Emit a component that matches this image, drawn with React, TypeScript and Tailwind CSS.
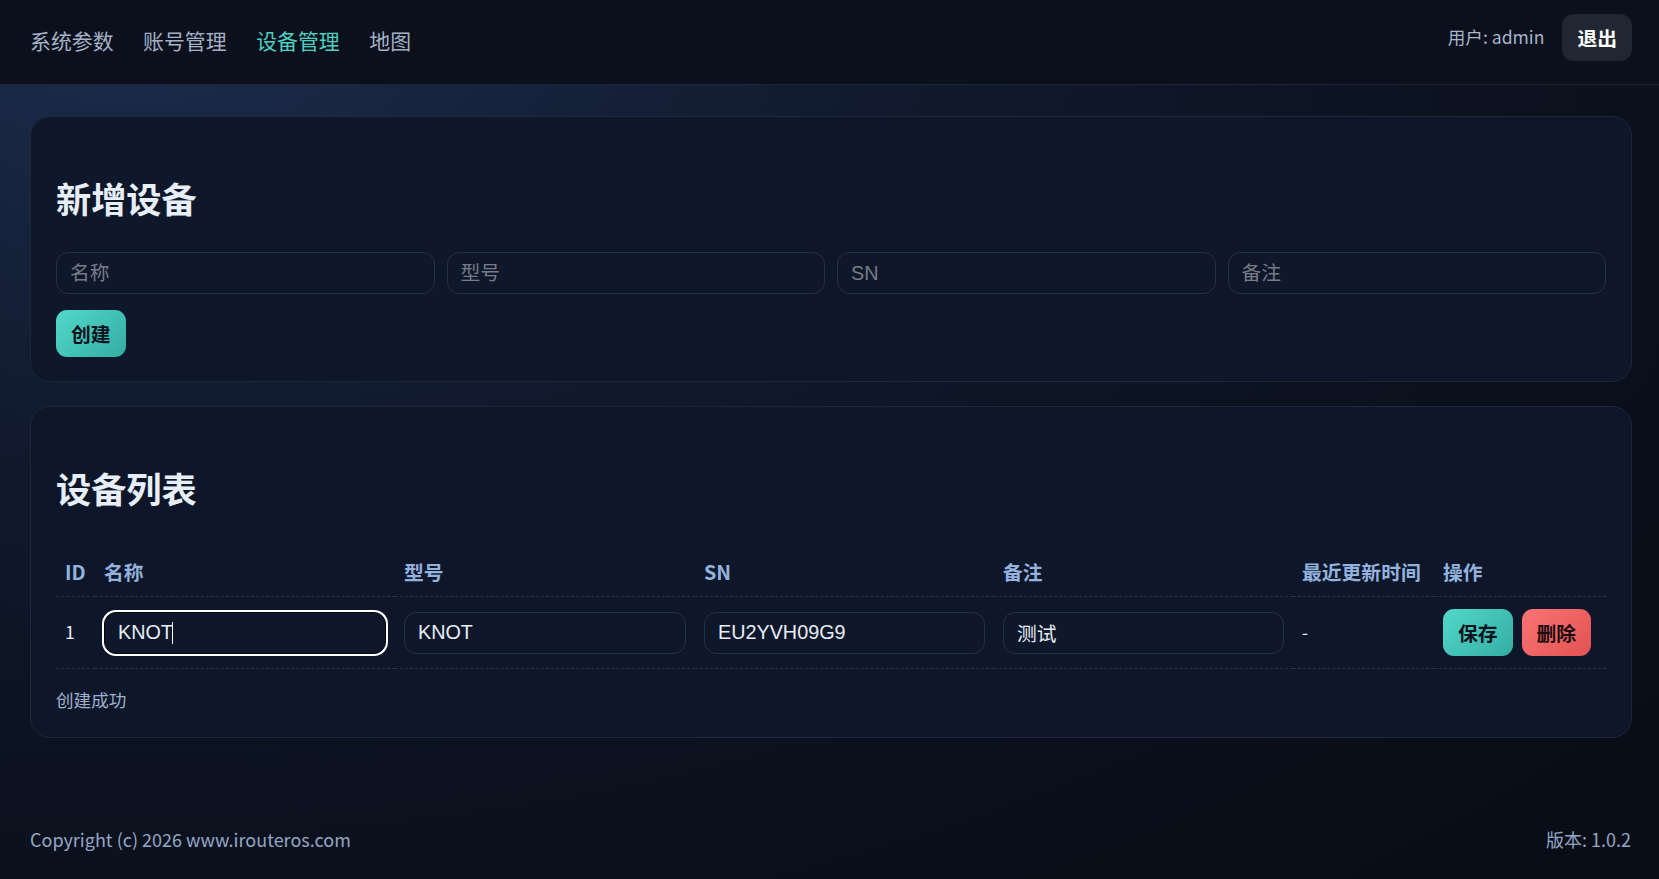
import React from 'react';

interface Device {
  id: number;
  name: string;
  model: string;
  sn: string;
  note: string;
  updatedAt: string;
}

const devices: Device[] = [
  { id: 1, name: 'KNOT', model: 'KNOT', sn: 'EU2YVH09G9', note: '测试', updatedAt: '-' },
];

const navItems = ['系统参数', '账号管理', '设备管理', '地图'];

const inputClass =
  "h-[42px] w-full rounded-[12px] border border-[#263044] bg-[#0f172a] px-[13px] text-[19.8px] text-[#e8eef6] placeholder:text-[#767c87] outline-none font-['Liberation_Sans','Noto_Sans_CJK_SC',sans-serif]";

const cellInputClass =
  "h-[42px] w-full rounded-[12px] border bg-[#0f172a] px-[13px] text-[19.8px] text-[#e8eef6] outline-none font-['Liberation_Sans','Noto_Sans_CJK_SC',sans-serif]";

const primaryBtn =
  'h-[47px] rounded-[11px] bg-[linear-gradient(135deg,#52d8c9,#34ada3)] px-[15px] text-[19.8px] font-bold text-[#0b1220]';

const dangerBtn =
  'h-[47px] rounded-[11px] bg-[linear-gradient(135deg,#fb7474,#e25252)] px-[15px] text-[19.8px] font-bold text-[#1a0b0e]';

const NavBar: React.FC = () => (
  <header className="flex items-start justify-between border-b border-[#1c2435] bg-[#0b101c] pt-[14px] pb-[23px] pl-[30px] pr-[27px]">
    <nav className="mt-[6px] flex items-center gap-[29.5px] text-[20.9px] leading-[41px]">
      {navItems.map(item => (
        <a
          key={item}
          className={item === '设备管理' ? 'text-[#4fd1c2]' : 'text-[#a3b0c6]'}
        >
          {item}
        </a>
      ))}
    </nav>
    <div className="flex items-center gap-[18px]">
      <span className="text-[17.6px] text-[#a8b6cc]">用户: admin</span>
      <button className="h-[47px] rounded-[12px] bg-[#202733] px-[15px] text-[19.8px] font-bold text-white">
        退出
      </button>
    </div>
  </header>
);

const CardTitle: React.FC<{ children: React.ReactNode; className?: string }> = ({
  children,
  className,
}) => (
  <h2
    className={`mt-[36px] text-[35.2px] font-bold leading-[42px] text-[#e8eef8] ${className ?? ''}`}
  >
    {children}
  </h2>
);

const AddDeviceCard: React.FC = () => (
  <section className="rounded-[20px] border border-[#1e2739] bg-[#0f172a]/95 px-[25px] pt-[24px] pb-[24px]">
    <CardTitle className="mb-[33px]">新增设备</CardTitle>
    <div className="grid grid-cols-4 gap-[12px]">
      <input className={inputClass} placeholder="名称" />
      <input className={inputClass} placeholder="型号" />
      <input className={inputClass} placeholder="SN" />
      <input className={inputClass} placeholder="备注" />
    </div>
    <button className={`${primaryBtn} mt-[16px]`}>创建</button>
  </section>
);

const DeviceListCard: React.FC = () => (
  <section className="rounded-[20px] border border-[#1e2739] bg-[#0f172a]/95 px-[25px] pt-[24px] pb-[24px]">
    <CardTitle className="mb-[39px]">设备列表</CardTitle>
    <table className="w-full table-fixed border-collapse text-left">
      <thead>
        <tr className="border-b border-dashed border-[#2a3447] text-[19.8px] leading-[24px] text-[#93b2de]">
          <th className="w-[39px] px-[9px] py-[12px] font-semibold">ID</th>
          <th className="w-[300px] px-[9px] py-[12px] font-semibold">名称</th>
          <th className="w-[300px] px-[9px] py-[12px] font-semibold">型号</th>
          <th className="w-[299px] px-[9px] py-[12px] font-semibold">SN</th>
          <th className="w-[299px] px-[9px] py-[12px] font-semibold">备注</th>
          <th className="w-[141px] px-[9px] py-[12px] font-semibold">最近更新时间</th>
          <th className="px-[9px] py-[12px] font-semibold">操作</th>
        </tr>
      </thead>
      <tbody>
        {devices.map((d, i) => (
          <tr key={d.id} className="border-b border-dashed border-[#2a3447] text-[17.6px] text-[#e8eef6]">
            <td className="px-[9px] py-[12px]">{d.id}</td>
            <td className="px-[9px] py-[12px]">
              <div className="relative">
                <input
                  className={`${cellInputClass} ${
                    i === 0 ? 'border-[#05070c] ring-2 ring-white' : 'border-[#263044]'
                  }`}
                  defaultValue={d.name}
                />
                {i === 0 && (
                  <span className="absolute left-[68px] top-[10px] h-[22px] w-px bg-white" />
                )}
              </div>
            </td>
            <td className="px-[9px] py-[12px]">
              <input className={`${cellInputClass} border-[#263044]`} defaultValue={d.model} />
            </td>
            <td className="px-[9px] py-[12px]">
              <input className={`${cellInputClass} border-[#263044]`} defaultValue={d.sn} />
            </td>
            <td className="px-[9px] py-[12px]">
              <input className={`${cellInputClass} border-[#263044]`} defaultValue={d.note} />
            </td>
            <td className="px-[9px] py-[12px]">{d.updatedAt}</td>
            <td className="px-[9px] py-[12px]">
              <div className="flex gap-[9px]">
                <button className={primaryBtn}>保存</button>
                <button className={dangerBtn}>删除</button>
              </div>
            </td>
          </tr>
        ))}
      </tbody>
    </table>
    <p className="mt-[18px] text-[17.6px] leading-[26px] text-[#9fb0cc]">创建成功</p>
  </section>
);

export default function App() {
  return (
    <div className="flex min-h-screen flex-col bg-[#0a0f1b] bg-[radial-gradient(ellipse_at_8%_0%,#1c2d4d_0%,#111a2e_35%,#0b111e_65%,#080c15_100%)] font-['Noto_Sans_CJK_SC','Noto_Sans',sans-serif] text-[17.6px]">
      <NavBar />
      <main className="flex flex-1 flex-col gap-[24px] pt-[31px] pl-[30px] pr-[27px]">
        <AddDeviceCard />
        <DeviceListCard />
      </main>
      <footer className="flex items-center justify-between py-[27px] pl-[30px] pr-[28px] text-[18px] leading-[26px] text-[#94a6c4]">
        <span>Copyright (c) 2026 www.irouteros.com</span>
        <span>版本: 1.0.2</span>
      </footer>
    </div>
  );
}
